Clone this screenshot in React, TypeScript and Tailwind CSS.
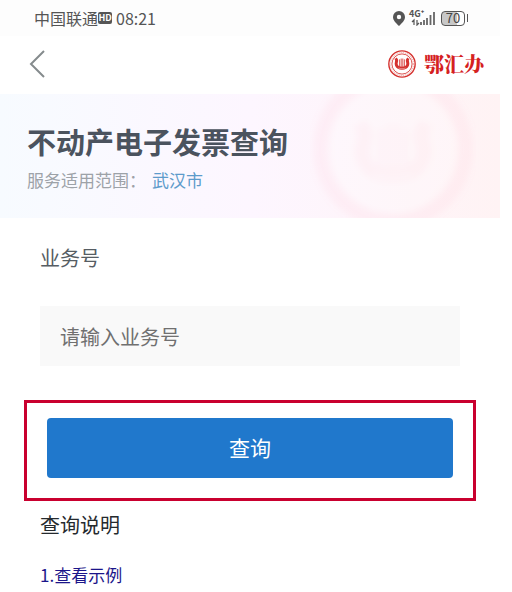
import { useState } from "react";

function LyreShape() {
  return (
    <>
      <path
        d="M23 18c-3 5-8 7-11 6 3 4 5 8 3 15-4 13 1 27 14 35 6 3 13 4 21 4s15-1 21-4c13-8 18-22 14-35-2-7 0-11 3-15-3 1-8-1-11-6-5 6-8 9-8 15 0 8 4 13 2 20-2 7-10 11-21 11s-19-4-21-11c-2-7 2-12 2-20 0-6-3-9-8-15z"
        fill="currentColor"
      />
      <path d="M38 27v40M46 23v44M54 23v44M62 27v40" stroke="currentColor" strokeWidth="4" />
      <path d="M32 70c11 4 25 4 36 0" stroke="#fff" strokeWidth="2" fill="none" />
    </>
  );
}

function Emblem() {
  return (
    <svg viewBox="0 0 100 100" className="size-7 text-[#d5322f]" aria-hidden="true">
      <circle cx="50" cy="50" r="47" fill="none" stroke="currentColor" strokeWidth="5" />
      <circle cx="50" cy="50" r="41" fill="none" stroke="currentColor" strokeWidth="4" strokeDasharray="4 3" opacity="0.35" />
      <circle cx="50" cy="50" r="36" fill="none" stroke="currentColor" strokeWidth="3" />
      <g transform="translate(14 14) scale(0.72)">
        <LyreShape />
      </g>
    </svg>
  );
}

function Watermark() {
  return (
    <svg viewBox="0 0 166 166" className="absolute -top-7 right-6 size-[166px] text-[#ff9fae]" aria-hidden="true">
      <defs>
        <filter id="soften">
          <feGaussianBlur stdDeviation="3" />
        </filter>
      </defs>
      <g filter="url(#soften)">
        <circle cx="83" cy="83" r="72" fill="none" stroke="currentColor" strokeWidth="16" opacity="0.08" />
        <circle cx="83" cy="83" r="65" fill="#fff" opacity="0.2" />
        <g transform="translate(30 34) scale(1.06)" opacity="0.06">
          <LyreShape />
        </g>
      </g>
    </svg>
  );
}

function StatusBar() {
  return (
    <div className="flex h-9 items-center justify-between bg-[#fdfdfd] pr-8 pl-[34px] text-base text-[#555]">
      <div className="flex items-center">
        <span>中国联通</span>
        <span className="flex h-3 w-3.5 items-center justify-center rounded-xs bg-[#555] text-[9px] font-bold text-white">
          HD
        </span>
        <span className="ml-1">08:21</span>
      </div>

      <div className="flex items-center">
        <svg viewBox="0 0 12 15" className="h-[15px] w-3" aria-hidden="true">
          <path fill="#555" fillRule="evenodd" d="M6 0a6 6 0 0 1 6 6c0 3.500-3 6-6 9-3-3-6-5.500-6-9a6 6 0 0 1 6-6zm0 3.800a2.200 2.200 0 1 0 0 4.400 2.200 2.200 0 0 0 0-4.400z" />
        </svg>
        <div className="relative ml-1 h-4 w-[26px]">
          <span className="absolute top-0 left-0 text-[9px] leading-2 font-bold">4G⁺</span>
          <svg viewBox="0 0 26 16" className="size-full" aria-hidden="true">
            <path d="M5 15v-5l-2 2M8 10v5l2-2" stroke="#555" strokeWidth="1.200" fill="none" />
            <path d="M12 12v3M15 10v5M18 8v7M21.500 5v10M25 2v13" stroke="#666" strokeWidth="1.800" />
          </svg>
        </div>
        <div className="ml-1.5 flex h-[15px] w-6 items-center justify-center rounded-sm border border-[#555] bg-linear-to-r from-[#c8c8c8] from-70% to-white to-70% text-[13px] leading-3 text-[#444]">
          70
        </div>
        <div className="ml-0.5 h-2 w-px bg-[#555]" />
      </div>
    </div>
  );
}

export default function App() {
  const [bizNo, setBizNo] = useState("");

  return (
    <div className="min-h-screen bg-white pr-3 font-['Noto_Sans_CJK_SC',sans-serif]">
      <StatusBar />

      <header className="flex h-[58px] items-center justify-between pr-4 pb-0.5 pl-[29px]">
        <button type="button" aria-label="返回">
          <svg viewBox="0 0 16 28" className="h-7 w-4" aria-hidden="true">
            <path d="M15 1L2 14l13 13" fill="none" stroke="#858b8d" strokeWidth="2" />
          </svg>
        </button>
        <div className="flex items-center gap-2">
          <Emblem />
          <span className="font-['Noto_Serif_CJK_SC','Noto_Sans_CJK_SC',serif] text-xl font-black text-[#d5211f]">
            鄂汇办
          </span>
        </div>
      </header>

      <section className="relative h-[124px] overflow-hidden bg-linear-to-r from-[#f7fbff] via-[#fdf6ff] to-[#fff3f4] px-[27px] pt-7">
        <Watermark />
        <h1 className="relative text-[29px] leading-[38px] font-bold text-[#4b535e]">不动产电子发票查询</h1>
        <p className="relative flex gap-1.5 text-[17px] leading-10 text-[#9da2a8]">
          <span>服务适用范围：</span>
          <span className="text-[#5d9bcb]">武汉市</span>
        </p>
      </section>

      {/* Query form */}
      <main className="px-10 pt-6">
        <form onSubmit={(e) => e.preventDefault()}>
          <label htmlFor="bizNo" className="block text-xl leading-8 text-[#565d63]">
            业务号
          </label>
          <input
            id="bizNo"
            value={bizNo}
            onChange={(e) => setBizNo(e.target.value)}
            placeholder="请输入业务号"
            className="mt-8 block h-[60px] w-full bg-[#f9f9f9] px-5 text-xl text-[#333] outline-none placeholder:text-[#707070]"
          />
          <div className="-mx-4 mt-[34px] border-3 border-[#c9002f] px-5 pt-[15px] pb-5">
            <button type="submit" className="block h-[60px] w-full rounded-sm bg-[#2078cc] text-[21px] text-white">
              查询
            </button>
          </div>
        </form>

        <h2 className="mt-2 text-xl leading-8 text-[#252a2e]">查询说明</h2>
        <a href="#example" className="mt-[18px] inline-block text-[17px] leading-8 text-[#1b158a]">
          1.查看示例
        </a>
      </main>
    </div>
  );
}
